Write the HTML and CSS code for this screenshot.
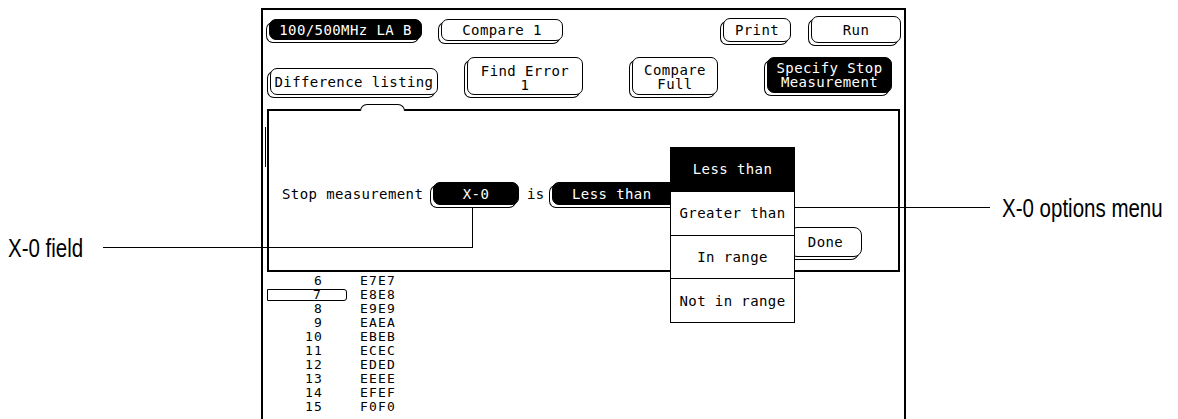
FILE: index.html
```html
<!DOCTYPE html>
<html lang="en">
<head>
<meta charset="utf-8">
<title>Specify Stop Measurement</title>
<link rel="stylesheet" href="styles.css">
</head>
<body>
<div class="page">
  <div class="screen">
    <div class="row row1">
      <div class="btn dark b-analyzer">100/500MHz LA B</div>
      <div class="btn b-compare1">Compare 1</div>
      <div class="btn b-print">Print</div>
      <div class="btn b-run">Run</div>
    </div>
    <div class="row row2">
      <div class="btn b-diff">Difference listing</div>
      <div class="btn b-find">Find Error<br>1</div>
      <div class="btn b-full">Compare<br>Full</div>
      <div class="btn dark b-spec">Specify Stop<br>Measurement</div>
    </div>
    <div class="dialog">
      <div class="stop-row">
        <span class="txt txt-stop">Stop measurement</span>
        <div class="btn dark field-x0">X-0</div>
        <span class="txt txt-is">is</span>
        <div class="btn dark field-cmp">Less than</div>
      </div>
      <div class="done-row">
        <div class="btn b-done">Done</div>
      </div>
      <ul class="menu">
        <li class="menu-item selected">Less than</li>
        <li class="menu-item">Greater than</li>
        <li class="menu-item">In range</li>
        <li class="menu-item">Not in range</li>
      </ul>
    </div>
    <div class="listing">
      <div class="lrow"><span class="num">6</span><span class="hex">E7E7</span></div>
      <div class="lrow"><span class="num marked">7</span><span class="hex">E8E8</span></div>
      <div class="lrow"><span class="num">8</span><span class="hex">E9E9</span></div>
      <div class="lrow"><span class="num">9</span><span class="hex">EAEA</span></div>
      <div class="lrow"><span class="num">10</span><span class="hex">EBEB</span></div>
      <div class="lrow"><span class="num">11</span><span class="hex">ECEC</span></div>
      <div class="lrow"><span class="num">12</span><span class="hex">EDED</span></div>
      <div class="lrow"><span class="num">13</span><span class="hex">EEEE</span></div>
      <div class="lrow"><span class="num">14</span><span class="hex">EFEF</span></div>
      <div class="lrow"><span class="num">15</span><span class="hex">F0F0</span></div>
    </div>
  </div>

  <div class="callout-text callout-left">X-0 field</div>
  <div class="leader leader-left"></div>
  <div class="leader leader-right"></div>
  <div class="callout-text callout-right">X-0 options menu</div>
</div>
</body>
</html>
```

FILE: styles.css
```css
* { box-sizing: border-box; }

html, body {
  margin: 0;
  padding: 0;
  background: #fff;
}

.page {
  position: relative;
  width: 1178px;
  height: 419px;
  overflow: hidden;
  background: #fff;
  color: #000;
  font-family: "DejaVu Sans Mono", "Liberation Mono", monospace;
}

/* instrument screen */
.screen {
  margin: 8px 0 0 261px;
  width: 645px;
  height: 430px;
  border: 2px solid #000;
  border-bottom: none;
  display: flex;
  flex-direction: column;
  background: #fff;
}

.row {
  display: flex;
  flex: none;
}

.row1 {
  margin-top: 6px;
  height: 27px;
  align-items: center;
}

.row2 {
  margin-top: 14px;
  height: 38px;
  align-items: flex-end;
}

/* HP style soft keys */
.btn {
  flex: none;
  display: flex;
  align-items: center;
  justify-content: center;
  text-align: center;
  border: 1.5px solid #000;
  border-radius: 7px;
  background: #fff;
  color: #000;
  font-size: 14px;
  letter-spacing: 0.4px;
  line-height: 14px;
  white-space: nowrap;
  box-shadow: -3px 3px 0 -1px #fff, -3px 3px 0 0 #000;
}

.btn.dark {
  background: #000;
  color: #fff;
}

.b-analyzer { margin-left: 6px; width: 153px; height: 21px; }
.b-compare1 { margin-left: 19px; width: 122px; height: 22px; }
.b-print { margin-left: auto; width: 68px; height: 24px; }
.b-run { margin-left: 20px; margin-right: 3px; width: 90px; height: 27px; }

.b-diff { margin-left: 7px; width: 168px; height: 27px; }
.b-find { margin-left: 29px; width: 116px; height: 38px; padding-top: 4px; }
.b-full { margin-left: 49px; width: 86px; height: 38px; padding-top: 1px; }
.b-spec { margin-left: 49px; margin-bottom: 2px; width: 125px; height: 36px; }

/* dialog */
.dialog {
  position: relative;
  flex: none;
  margin: 14px 0 0 4px;
  width: 633px;
  height: 163px;
  border: 2px solid #000;
  background: #fff;
}

.dialog::before {
  content: "";
  position: absolute;
  left: -4px;
  top: 16px;
  height: 40px;
  border-left: 1.5px solid #000;
}

.dialog::after {
  content: "";
  position: absolute;
  left: 91px;
  top: -7px;
  width: 43px;
  height: 6px;
  border: 1.5px solid #000;
  border-bottom: none;
  border-radius: 9px 9px 0 0;
  background: #fff;
}

.stop-row {
  display: flex;
  align-items: center;
  margin-top: 71px;
  padding-left: 13px;
  height: 23px;
}

.txt {
  flex: none;
  font-size: 14px;
  letter-spacing: 0.4px;
  white-space: nowrap;
}

.txt-stop { width: 151px; }
.txt-is { width: 25px; margin-left: 8px; }

.field-x0 { width: 86px; height: 23px; }
.field-cmp { width: 130px; height: 23px; justify-content: flex-start; padding-left: 19px; }

.done-row {
  display: flex;
  justify-content: flex-end;
  margin-top: 22px;
  padding-right: 36px;
}

.b-done { width: 73px; height: 30px; border-radius: 8px; }

/* popup menu */
.menu {
  position: absolute;
  left: 401px;
  top: 36px;
  z-index: 5;
  width: 125px;
  height: 176px;
  margin: 0;
  padding: 0;
  list-style: none;
  border: 1.5px solid #000;
  background: #fff;
  display: flex;
  flex-direction: column;
}

.menu-item {
  flex: 1;
  display: flex;
  align-items: center;
  justify-content: center;
  font-size: 14px;
  letter-spacing: 0.4px;
  white-space: nowrap;
  border-top: 1.5px solid #000;
}

.menu-item:first-child { border-top: none; }

.menu-item.selected {
  background: #000;
  color: #fff;
}

/* listing */
.listing {
  margin: 2px 0 0 4px;
  display: flex;
  flex-direction: column;
}

.lrow {
  display: flex;
  height: 14px;
  align-items: flex-start;
  font-size: 13px;
  line-height: 12px;
  letter-spacing: 1.2px;
}

.num {
  width: 80px;
  height: 12px;
  margin-top: 1px;
  text-align: right;
  padding-right: 24px;
}

.num.marked {
  border: 1.5px solid #000;
  border-radius: 0 3px 3px 0;
  line-height: 10px;
}

.hex {
  margin-left: 13px;
  margin-top: 1px;
}

/* annotations */
.callout-text {
  position: absolute;
  z-index: 10;
  height: 30px;
  line-height: 30px;
  font-family: "Liberation Sans", Arial, sans-serif;
  font-size: 25px;
  white-space: nowrap;
  color: #000;
  transform: scaleX(0.82);
  transform-origin: left center;
}

.callout-left { left: 8px; top: 233px; }
.callout-right { left: 1002px; top: 193px; }

.leader {
  position: absolute;
  z-index: 10;
}

.leader-left {
  left: 103px;
  top: 207px;
  width: 370px;
  height: 41px;
  border-right: 1.5px solid #000;
  border-bottom: 1.5px solid #000;
}

.leader-right {
  left: 795px;
  top: 207px;
  width: 195px;
  height: 0;
  border-top: 1.5px solid #000;
}
```
